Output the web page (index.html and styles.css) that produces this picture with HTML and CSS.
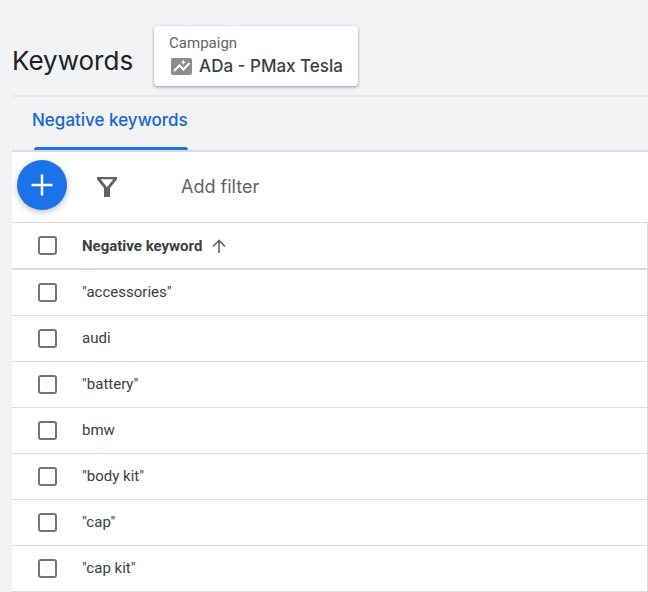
FILE: index.html
```html
<!DOCTYPE html>
<html lang="en">
<head>
<meta charset="utf-8">
<meta name="viewport" content="width=device-width, initial-scale=1">
<title>Keywords</title>
<link rel="stylesheet" href="styles.css">
</head>
<body>
<main class="page">
  <header class="header">
    <h1 class="title">Keywords</h1>
    <button class="campaign" type="button">
      <span class="campaign-label">Campaign</span>
      <span class="campaign-name">
        <svg class="campaign-icon" width="21" height="17" viewBox="0 0 21 17" aria-hidden="true">
          <rect width="21" height="17" rx="2" fill="#8c8c8c"/>
          <path d="M3 13l5.500-5.500 4 4L18.500 5" fill="none" stroke="#fff" stroke-width="2"/>
          <path d="m12.3 1.500.8 1.900 1.900.8-1.900.8-.8 1.900-.8-1.900-1.900-.8 1.900-.8z" fill="#fff"/>
        </svg>
        ADa - PMax Tesla
      </span>
    </button>
  </header>
  <nav class="tabs">
    <a class="tab" href="#negative">Negative keywords</a>
  </nav>
  <section class="panel" id="negative">
    <div class="toolbar">
      <button class="add" type="button" aria-label="Add negative keywords">
        <svg width="22" height="22" viewBox="0 0 22 22" aria-hidden="true"><path d="M11 .5v21M.5 11h21" stroke="#fff" stroke-width="2.5"/></svg>
      </button>
      <button class="filter" type="button" aria-label="Filter">
        <svg width="20" height="20" viewBox="0 0 20 20" aria-hidden="true"><path fill="#5f6368" fill-rule="evenodd" d="M0 0h20v2.300L13 11v9H7v-9L0 2.300zM3.700 2.300 10 10.200l6.300-7.900z"/></svg>
      </button>
      <button class="add-filter" type="button">Add filter</button>
    </div>
    <table class="keywords">
      <thead>
        <tr>
          <th class="check"><input type="checkbox" aria-label="Select all"></th>
          <th>
            <span class="sort">Negative keyword
              <svg width="14" height="14" viewBox="0 0 14 14" aria-hidden="true"><path d="M7 14V1.500M1 7.500l6-6 6 6" fill="none" stroke="#5f6368" stroke-width="1.600"/></svg>
            </span>
          </th>
        </tr>
      </thead>
      <tbody>
        <tr><td class="check"><input type="checkbox" id="k1"></td><td><label for="k1">"accessories"</label></td></tr>
        <tr><td class="check"><input type="checkbox" id="k2"></td><td><label for="k2">audi</label></td></tr>
        <tr><td class="check"><input type="checkbox" id="k3"></td><td><label for="k3">"battery"</label></td></tr>
        <tr><td class="check"><input type="checkbox" id="k4"></td><td><label for="k4">bmw</label></td></tr>
        <tr><td class="check"><input type="checkbox" id="k5"></td><td><label for="k5">"body kit"</label></td></tr>
        <tr><td class="check"><input type="checkbox" id="k6"></td><td><label for="k6">"cap"</label></td></tr>
        <tr><td class="check"><input type="checkbox" id="k7"></td><td><label for="k7">"cap kit"</label></td></tr>
      </tbody>
    </table>
  </section>
</main>
</body>
</html>
```
FILE: styles.css
```css
* {
  box-sizing: border-box;
}

body {
  margin: 0;
  background: #f1f3f4;
  color: #3c4043;
  font: 15px/20px Roboto, sans-serif;
}

button {
  margin: 0;
  padding: 0;
  border: 0;
  background: none;
  color: inherit;
  font: inherit;
  cursor: pointer;
}

svg {
  display: block;
  flex: none;
}

.page {
  padding-left: 12px;
}

.header {
  display: flex;
  align-items: flex-end;
  gap: 21px;
  padding: 26px 0 9px;
  border-bottom: 2px solid #e6e8e9;
}

.title {
  margin: 0;
  padding-bottom: 7px;
  color: #202124;
  font: 400 26px/36px "Google Sans", Inter, sans-serif;
}

.campaign {
  padding: 6px 15px 8px;
  border-radius: 4px;
  background: #fff;
  box-shadow: 0 1px 3px rgba(60, 64, 67, 0.5);
  text-align: left;
}

.campaign-label {
  display: block;
  color: #5f6368;
  line-height: 22px;
}

.campaign-name {
  display: flex;
  align-items: center;
  gap: 7px;
  font: 500 17px/24px "Google Sans", Inter, sans-serif;
}

.campaign-icon {
  margin-left: 2px;
}

.tabs {
  display: flex;
  padding-left: 20px;
  border-bottom: 2px solid #d9dbdd;
}

.tab {
  display: flex;
  flex-direction: column;
  gap: 15px;
  padding-top: 11px;
  color: #1967d2;
  font: 500 17px/24px "Google Sans", Inter, sans-serif;
  text-decoration: none;
}

.tab::after {
  content: "";
  height: 3px;
  margin-left: 2px;
  border-radius: 3px 3px 0 0;
  background: #1a73e8;
}

.panel {
  background: #fff;
}

.toolbar {
  display: flex;
  align-items: center;
  padding: 8px 5px 12px;
}

.add {
  display: grid;
  place-items: center;
  width: 50px;
  height: 50px;
  border-radius: 50%;
  background: #1a73e8;
  box-shadow: 0 2px 6px rgba(60, 64, 67, 0.35);
}

.filter {
  margin: 4px 64px 0 30px;
}

.add-filter {
  padding-top: 4px;
  color: #5f6368;
  font: 400 18px/24px "Google Sans", Inter, sans-serif;
}

.keywords {
  width: 100%;
  border: solid #dadcde;
  border-width: 1px 1px 0 0;
  border-spacing: 0;
}

th,
td {
  height: 46px;
  padding: 0;
  border-bottom: 1px solid #dadcde;
  text-align: left;
}

th {
  height: 47px;
  border-bottom-width: 2px;
  font-weight: 700;
}

td {
  padding-bottom: 2px;
}

.check {
  width: 70px;
  padding: 0 0 0 26px;
}

input {
  display: block;
  width: 19px;
  height: 19px;
  margin: 0;
  border: 2px solid #757575;
  border-radius: 3px;
  appearance: none;
}

input:checked {
  background: #1a73e8;
}

.sort {
  display: flex;
  align-items: center;
  gap: 10px;
}
```
